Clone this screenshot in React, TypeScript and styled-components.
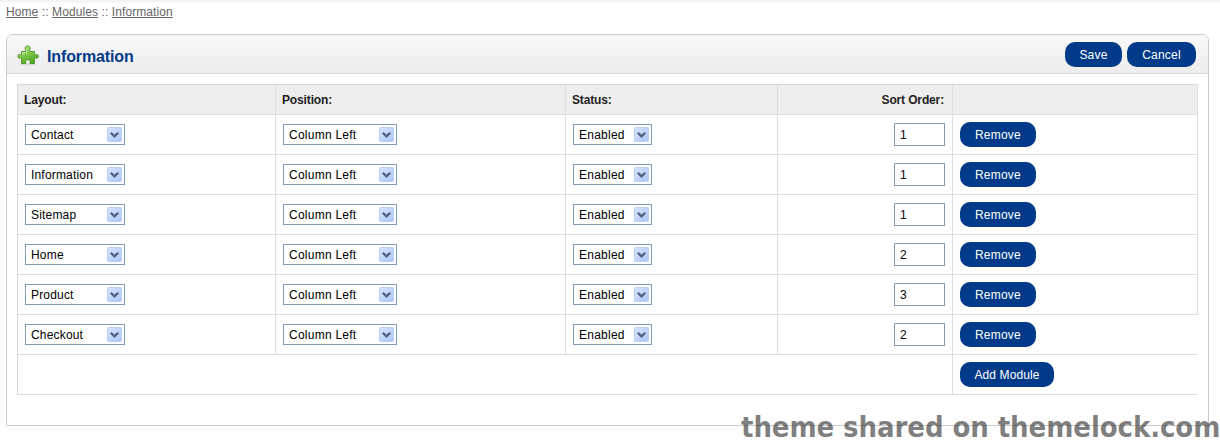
import React from "react";
import styled, { createGlobalStyle } from "styled-components";

const GlobalStyle = createGlobalStyle`
  * { box-sizing: border-box; }
  body { margin: 0; background: #fff; overflow: hidden; }
  #root { font-family: "Liberation Sans", Arial, sans-serif; font-size: 12px; color: #000; }
`;

const Page = styled.div`
  position: relative;
  width: 1220px;
  height: 443px;
  padding: 0 11px 0 6px;
  background: linear-gradient(#f0f0f0, #fff 4px);
`;

const Breadcrumb = styled.nav`
  height: 34px;
  padding-top: 5px;
  line-height: 14px;
  color: #666;
  white-space: pre;
  letter-spacing: 0.09px;
`;

const Crumb = styled.a`
  color: #666;
  text-decoration: underline;
`;

const Panel = styled.section`
  width: 1203px;
  height: 392px;
  border: 1px solid #ccc;
  border-radius: 7px 7px 0 0;
`;

const PanelHeader = styled.header`
  display: flex;
  align-items: center;
  height: 39px;
  padding: 0 12px 0 10px;
  border-bottom: 1px solid #d6d6d6;
  border-radius: 6px 6px 0 0;
  background: linear-gradient(#f8f8f8, #ededed);
`;

const Title = styled.h1`
  margin: 5px auto 0 8px;
  font-size: 16px;
  line-height: 20px;
  letter-spacing: -0.12px;
  color: #003a88;
`;

const Button = styled.button<{ $width: number; $tracking?: number }>`
  width: ${(p) => p.$width}px;
  height: 25px;
  padding: 1px 0 0;
  border: 0;
  border-radius: 10px;
  background: #003a88;
  color: #fff;
  font: 12px/24px "Liberation Sans", Arial, sans-serif;
  letter-spacing: ${(p) => p.$tracking ?? 0.22}px;
  text-align: center;
  & + & { margin-left: 5px; }
`;

const Table = styled.div`
  margin: 10px 0 0 10px;
  width: 1181px;
  border-top: 1px solid #d8d8d8;
  border-left: 1px solid #d8d8d8;
`;

const Row = styled.div<{ $open?: boolean }>`
  display: grid;
  grid-template-columns: 258px 290px 212px 175px 245px;
  height: 40px;
  & > :last-child { border-right-color: ${(p) => (p.$open ? "transparent" : "#ddd")}; }
`;

const Cell = styled.div<{ $end?: boolean; $span?: number }>`
  display: flex;
  align-items: center;
  justify-content: ${(p) => (p.$end ? "flex-end" : "flex-start")};
  grid-column: span ${(p) => p.$span ?? 1};
  padding: 0 7px;
  border-right: 1px solid #ddd;
  border-bottom: 1px solid #ddd;
`;

const HeadRow = styled(Row)`
  height: 30px;
  background: #eee;
  font-weight: bold;
  letter-spacing: -0.14px;
  color: #222;
`;

const HeadCell = styled(Cell)`
  padding: 0 8px 0 6px;
`;

const SelectBox = styled.div<{ $width: number; $tracking: number }>`
  display: flex;
  align-items: center;
  justify-content: space-between;
  width: ${(p) => p.$width}px;
  height: 21px;
  padding: 0 2px 0 5px;
  border: 1px solid #7f9db9;
  background: #fff;
  white-space: nowrap;
  letter-spacing: ${(p) => p.$tracking}px;
`;

const SelectLabel = styled.span`
  padding-top: 2px;
  line-height: 17px;
`;

const Arrow = styled.svg`
  flex: none;
  width: 15px;
  height: 15px;
`;

const OrderInput = styled.input`
  width: 51px;
  height: 23px;
  padding: 0 5px;
  border: 1px solid #7f9db9;
  background: #fff;
  color: #000;
  font: 12px "Liberation Sans", Arial, sans-serif;
  outline: 0;
`;

const Watermark = styled.div`
  position: absolute;
  left: 741px;
  top: 410px;
  font: bold 29px/34px "DejaVu Sans Condensed", "DejaVu Sans", sans-serif;
  font-stretch: condensed;
  letter-spacing: -0.1px;
  white-space: nowrap;
  color: rgba(0, 0, 0, 0.5);
`;

const Puzzle = styled.svg`
  flex: none;
  width: 22px;
  height: 22px;
  margin-top: 1px;
`;

function PuzzleIcon() {
  return (
    <Puzzle viewBox="0 0 22 22">
      <defs>
        <linearGradient id="leaf" x1="0" y1="0" x2="0.4" y2="1">
          <stop offset="0" stopColor="#b4e584" />
          <stop offset="0.55" stopColor="#7ecb48" />
          <stop offset="1" stopColor="#52ab22" />
        </linearGradient>
      </defs>
      <ellipse cx="11" cy="20.4" rx="8" ry="1" fill="#dadada" />
      <path
        d="M4.5 7.5H8.8V6C7.3 4.4 8.2 2 10.7 2S14.1 4.4 12.6 6V7.5H17.5V11H18.6C20 9.9 21.3 10.7 21.3 12.4S20 14.9 18.6 13.8H17.5V19.5H12.9V18.4C14 16.9 12.8 15.7 10.9 15.7S7.8 16.9 8.9 18.4V19.5H4.5V13.8H3.4C2 14.9 .9 14.1 .9 12.4S2 9.9 3.4 11H4.5Z"
        fill="url(#leaf)"
        stroke="#559632"
        strokeWidth="1"
        strokeLinejoin="round"
      />
      <path d="M5.5 11V8.5H9.8V5.5" fill="none" stroke="#d2f3b4" strokeWidth=".8" />
    </Puzzle>
  );
}

function Select({ label, width, tracking }: { label: string; width: number; tracking: number }) {
  return (
    <SelectBox $width={width} $tracking={tracking}>
      <SelectLabel>{label}</SelectLabel>
      <Arrow viewBox="0 0 15 15">
        <defs>
          <linearGradient id="sky" x1="0" y1="0" x2="1" y2="1">
            <stop offset="0" stopColor="#dbe5fe" />
            <stop offset="1" stopColor="#adc5f7" />
          </linearGradient>
        </defs>
        <rect x=".5" y=".5" width="14" height="14" rx="1" fill="url(#sky)" stroke="#bacdf6" />
        <path d="M3.8 5.7L7.5 9.4L11.2 5.7" fill="none" stroke="#4d6185" strokeWidth="2.3" />
      </Arrow>
    </SelectBox>
  );
}

const modules = [
  { layout: "Contact", order: "1" },
  { layout: "Information", order: "1" },
  { layout: "Sitemap", order: "1" },
  { layout: "Home", order: "2" },
  { layout: "Product", order: "3" },
  { layout: "Checkout", order: "2" },
];

export default function App() {
  return (
    <>
      <GlobalStyle />
      <Page>
        <Breadcrumb>
          <Crumb>Home</Crumb> :: <Crumb>Modules</Crumb> :: <Crumb>Information</Crumb>
        </Breadcrumb>
        <Panel>
          <PanelHeader>
            <PuzzleIcon />
            <Title>Information</Title>
            <Button $width={57}>Save</Button>
            <Button $width={69}>Cancel</Button>
          </PanelHeader>
          <Table>
            <HeadRow>
              <HeadCell>Layout:</HeadCell>
              <HeadCell>Position:</HeadCell>
              <HeadCell>Status:</HeadCell>
              <HeadCell $end>Sort Order:</HeadCell>
              <HeadCell />
            </HeadRow>
            {modules.map((m, i) => (
              <Row key={m.layout} $open={i === modules.length - 1}>
                <Cell><Select label={m.layout} width={100} tracking={0.18} /></Cell>
                <Cell><Select label="Column Left" width={114} tracking={0.25} /></Cell>
                <Cell><Select label="Enabled" width={79} tracking={0.25} /></Cell>
                <Cell $end><OrderInput defaultValue={m.order} /></Cell>
                <Cell><Button $width={76}>Remove</Button></Cell>
              </Row>
            ))}
            <Row $open>
              <Cell $span={4} />
              <Cell><Button $width={94} $tracking={0.1}>Add Module</Button></Cell>
            </Row>
          </Table>
        </Panel>
        <Watermark>theme shared on themelock.com</Watermark>
      </Page>
    </>
  );
}
